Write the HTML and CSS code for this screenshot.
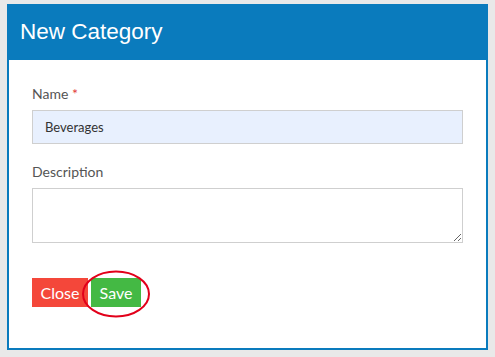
FILE: index.html
```html
<!DOCTYPE html>
<html lang="en">
<head>
    <meta charset="UTF-8">
    <meta name="viewport" content="width=device-width, initial-scale=1.0">
    <title>New Category</title>
    <link rel="stylesheet" href="styles.css">
</head>
<body>

    <div class="dialog">
        <div class="dialog-header">New Category</div>
        <form class="dialog-body">
            <div class="form-group">
                <label class="form-label" for="name">Name <span class="required">*</span></label>
                <input class="form-input" id="name" type="text" value="Beverages">
            </div>
            <div class="form-group">
                <label class="form-label" for="description">Description</label>
                <textarea class="form-textarea" id="description"></textarea>
            </div>
            <div class="form-actions">
                <button class="btn btn-close" type="button">Close</button>
                <button class="btn btn-save" type="button">Save</button>
                <svg class="highlight" width="70" height="50" viewBox="0 0 70 50">
                    <ellipse cx="35" cy="24" rx="33" ry="22.5" fill="none" stroke="#e2001a" stroke-width="2"/>
                </svg>
            </div>
        </form>
    </div>

</body>
</html>
```

FILE: styles.css
```css
body { margin: 0; padding: 4px 7px 0 7px; background-color: #e9e9e9; font-family: "Lato", "Liberation Sans", sans-serif; }
.dialog { width: 481px; box-sizing: border-box; background-color: #fff; }
.dialog-header { height: 56px; line-height: 56px; padding: 0 13px; background-color: #0a7bbd; color: #fff; font-family: "Liberation Sans", Arial, sans-serif; font-size: 22.5px; }
.dialog-body { border: 2px solid #0a7bbd; border-top: none; padding: 24px 23px 41px 23px; }
.form-group { margin-bottom: 18px; }
.form-label { display: block; font-size: 14px; line-height: 20px; color: #555; margin-bottom: 6px; }
.required { color: #e33b3b; }
.form-input { display: block; width: 100%; box-sizing: border-box; height: 34px; padding: 0 12px; border: 1px solid #cfcfcf; background-color: #e8f0fe; font-family: "Lato", sans-serif; font-size: 13px; color: #333; outline: none; }
.form-textarea { display: block; width: 100%; box-sizing: border-box; height: 55px; border: 1px solid #cfcfcf; background-color: #fff; font-family: "Lato", sans-serif; font-size: 13px; margin: 0; }
.form-actions { position: relative; margin-top: 35px; height: 29px; display: flex; gap: 3px; }
.btn { height: 29px; line-height: 29px; padding: 0 8px; border: none; border-radius: 0; color: #fff; font-family: "Lato", sans-serif; font-size: 16px; cursor: pointer; }
.btn-close { background-color: #f4473a; width: 56px; }
.btn-save { background-color: #44b944; width: 50px; }
.highlight { position: absolute; left: 49px; top: -8px; pointer-events: none; }
```
